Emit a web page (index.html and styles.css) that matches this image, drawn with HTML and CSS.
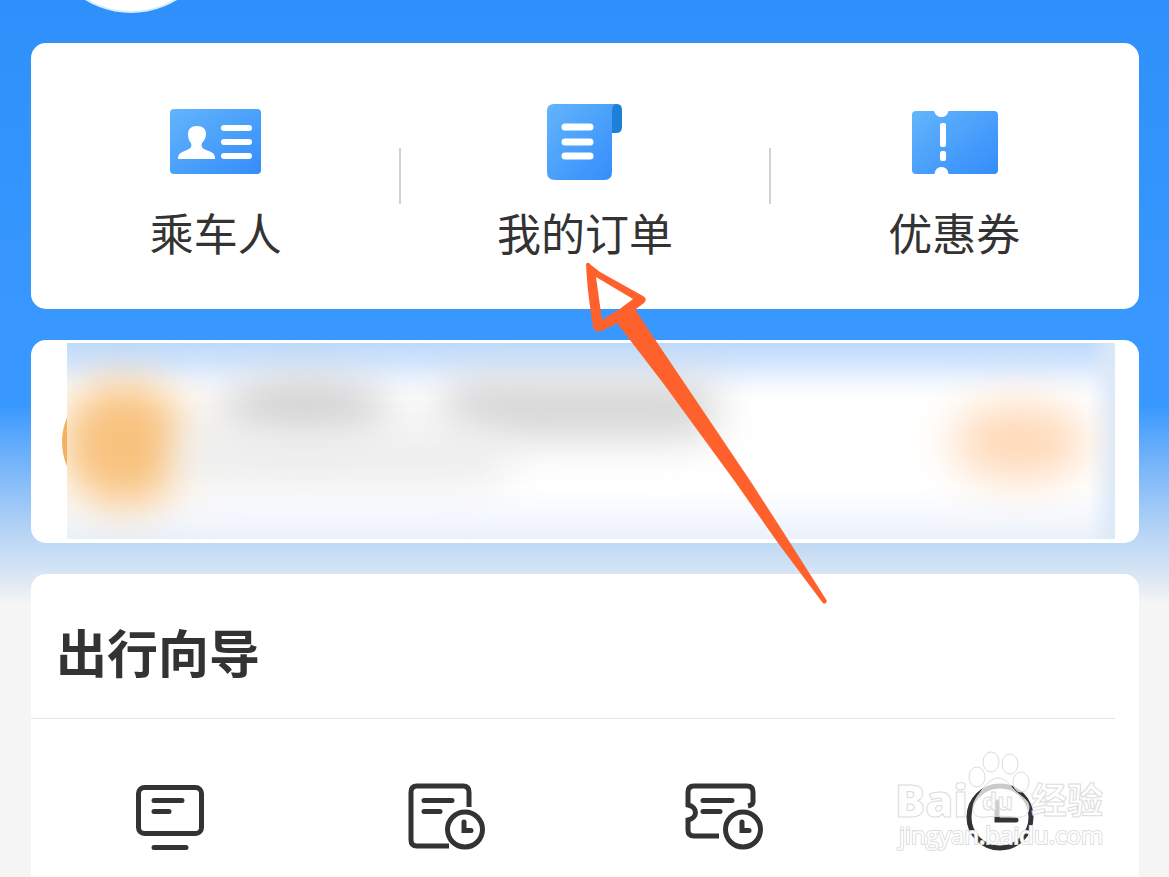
FILE: index.html
```html
<!DOCTYPE html>
<html lang="zh-CN">
<head>
<meta charset="utf-8">
<meta name="viewport" content="width=device-width, initial-scale=1">
<title>出行向导</title>
<link rel="stylesheet" href="styles.css">
</head>
<body>
<div class="page">
  <div class="avatar"></div>

  <nav class="card shortcuts">
    <a class="shortcut" href="#">
      <svg class="shortcut-icon" viewBox="169 100 92 84" width="92" height="84" aria-hidden="true">
        <defs><linearGradient id="blue" x1="0" y1="0" x2="1" y2="1"><stop offset="0" stop-color="#62b5fb"/><stop offset="1" stop-color="#348cfb"/></linearGradient></defs>
        <rect x="169" y="109" width="91" height="65" rx="4" fill="url(#blue)"/>
        <path d="M187 134c0-5 3-8 9-8s9 3 9 8c0 4-2 7-4 9-1 4 0 5 4 7 6 2 9 3 9 9h-37c0-6 4-7 9-9 4-2 5-3 4-7-2-2-3-5-3-9z" fill="#fff"/>
        <path d="M223 128h25M223 142h25M223 156h25" stroke="#fff" stroke-width="6" stroke-linecap="round"/>
      </svg>
      <span>乘车人</span>
    </a>
    <a class="shortcut" href="#">
      <svg class="shortcut-icon" viewBox="539 100 92 84" width="92" height="84" aria-hidden="true">
        <path d="M611 104h6q5 0 5 6v17q0 6-6 6h-5z" fill="#1d7fd6"/>
        <path d="M554 104h62q-4 1-4 7v61q0 8-8 8h-49q-8 0-8-8v-61q0-7 7-7z" fill="url(#blue)"/>
        <path d="M565 127h25M565 142h25M565 156h25" stroke="#fff" stroke-width="7" stroke-linecap="round"/>
      </svg>
      <span>我的订单</span>
      <svg class="pointer" viewBox="580 255 255 355" width="255" height="355" aria-hidden="true">
        <path fill="#ff612c" d="M610 314L663 383L736 483L778 543L822 602Q825 606 827 601L789 541L751 482L685 384L648 329L633 306z"/>
        <path fill="#ff612c" fill-rule="evenodd" d="M586 264Q588 261 591 265L600 272L643 296Q648 299 644 303L632 312L614 325L601 331Q594 333 593 326Q587 291 586 264zM596 277L602 320L617 311L633 299z"/>
      </svg>
    </a>
    <a class="shortcut" href="#">
      <svg class="shortcut-icon" viewBox="908 100 92 84" width="92" height="84" aria-hidden="true">
        <path d="M916 111h18q2 6 7.500 6t7-6H994q4 0 4 4v55q0 4-4 4h-45.500q-1-7-7-7t-7 7H916q-4 0-4-4v-55q0-4 4-4z" fill="url(#blue)"/>
        <rect x="940" y="123" width="6" height="24" rx="2" fill="#fff"/>
        <rect x="940" y="151" width="6" height="10" rx="2" fill="#fff"/>
      </svg>
      <span>优惠券</span>
    </a>
  </nav>

  <section class="card notice">
    <div class="badge"></div>
    <div class="strip">
      <div class="blob blob-orange"></div>
      <div class="blob blob-title"></div>
      <div class="blob blob-title-long"></div>
      <div class="blob blob-text"></div>
      <div class="blob blob-action"></div>
    </div>
  </section>

  <section class="card guide">
    <h2 class="guide-title">出行向导</h2>
    <div class="guide-list">
      <a class="guide-item" href="#" aria-label="信息屏">
        <svg viewBox="130 780 80 72" width="80" height="72">
          <rect x="138.500" y="787.500" width="63" height="46" rx="6"/>
          <path d="M154 800.500h28M154 811.500h15M154 847.500h32" class="thin"/>
        </svg>
      </a>
      <a class="guide-item" href="#" aria-label="时刻单">
        <svg viewBox="408 780 80 72" width="80" height="72">
          <path d="M470 807v-15q0-6-6-6h-46q-6 0-6 6v48q0 6 6 6h32"/>
          <path d="M425 800.500h28M425 811.500h16" class="thin"/>
          <circle cx="466" cy="829.500" r="17.500"/>
          <path d="M465 822v8.500h7" class="thin"/>
        </svg>
      </a>
      <a class="guide-item" href="#" aria-label="车票时间">
        <svg viewBox="684 780 80 72" width="80" height="72">
          <path d="M748 806q5-1 5-4v-10q0-6-6-6h-53q-6 0-6 6v13c10 2 10 13 0 15v10q0 6 6 6h25"/>
          <path d="M703 800.500h29M703 811.500h17" class="thin"/>
          <circle cx="743" cy="829.500" r="17.500"/>
          <path d="M742 822v8.500h7" class="thin"/>
        </svg>
      </a>
      <a class="guide-item" href="#" aria-label="时间">
        <svg viewBox="961 780 80 72" width="80" height="72">
          <circle cx="1000" cy="817" r="31"/>
          <path d="M997 802v18h19" class="thin"/>
        </svg>
        <svg class="watermark" viewBox="890 745 220 110" width="220" height="110" aria-hidden="true">
          <g class="mark">
            <ellipse cx="977" cy="777" rx="8" ry="10"/>
            <ellipse cx="991" cy="762" rx="8" ry="10"/>
            <ellipse cx="1010" cy="764" rx="8" ry="10"/>
            <ellipse cx="1021" cy="782" rx="8" ry="10"/>
            <path d="M984 787c6-6 9-9 14-9 6 0 10 4 15 11 8 8 16 11 16 18 0 9-7 11-14 10-11-1-20-1-30 0-8 1-13-2-12-10 1-8 6-12 11-20z"/>
            <text x="895" y="817" class="mark-latin">Bai</text>
            <text x="982" y="810" class="mark-du">du</text>
            <text x="1031" y="814" class="mark-cjk">经验</text>
          </g>
          <text x="899" y="844" class="mark-url">jingyan.baidu.com</text>
        </svg>
      </a>
    </div>
  </section>
</div>
</body>
</html>
```
FILE: styles.css
```css
* {
  box-sizing: border-box;
}

body {
  margin: 0;
  background: #f5f5f5;
  color: #333;
  font-family: "Noto Sans CJK SC", sans-serif;
}

.page {
  position: relative;
  display: flex;
  flex-direction: column;
  gap: 31px;
  min-height: 100vh;
  padding: 43px 30px 0 31px;
  overflow: hidden;
  background: linear-gradient(#2f90fb 0, #3898ff 330px, #3898ff 405px, #6db0fb 455px, #bdd8f5 540px, #d6e4f5 572px, #f5f5f5 604px);
}

.avatar {
  position: absolute;
  top: -163px;
  left: 43px;
  width: 176px;
  height: 176px;
  border: 2px solid #d3edff;
  border-radius: 50%;
  background: #fff;
}

.card {
  border-radius: 15px;
  background: #fff;
}

.shortcuts {
  display: grid;
  grid-template-columns: repeat(3, 1fr);
  padding: 57px 0 44px;
}

.shortcut {
  position: relative;
  display: flex;
  flex-direction: column;
  align-items: center;
  gap: 15px;
  color: #333;
  font-size: 44px;
  line-height: 66px;
  text-decoration: none;
}

.shortcut + .shortcut::before {
  content: "";
  position: absolute;
  top: 48px;
  left: -1px;
  width: 2px;
  height: 56px;
  background: #d2d2d2;
}

.pointer {
  position: absolute;
  z-index: 2;
  top: 155px;
  left: 180px;
  pointer-events: none;
}

.notice {
  position: relative;
  padding: 3px 24px 4px 36px;
}

.badge {
  position: absolute;
  top: 40px;
  left: 31px;
  width: 124px;
  height: 124px;
  border-radius: 50%;
  background: #f3b263;
}

.strip {
  position: relative;
  height: 196px;
  overflow: hidden;
  background:
    linear-gradient(270deg, #dce8f7 0, #dce8f700 28px),
    linear-gradient(#bddafb 0, #d0e4fd 18px, #f2f7ff 40px, #fff 55px, #fff 145px, #f5f8fe 175px, #eaf1fa 100%);
}

.blob {
  position: absolute;
  border-radius: 50%;
  filter: blur(22px);
}

.blob-orange {
  top: 38px;
  left: -6px;
  width: 126px;
  height: 126px;
  background: #f8c27e;
}

.blob-title {
  top: 36px;
  left: 150px;
  width: 175px;
  height: 66px;
  background: #cecece;
}

.blob-title-long {
  top: 38px;
  left: 375px;
  width: 275px;
  height: 56px;
  border-radius: 24px;
  background: #d2d2d2;
}

.blob-text {
  top: 84px;
  left: 110px;
  width: 330px;
  height: 60px;
  border-radius: 24px;
  background: #ededed;
}

.blob-action {
  top: 60px;
  left: 885px;
  width: 134px;
  height: 78px;
  background: #ffd9b8;
}

.guide {
  flex: 1;
  border-radius: 15px 15px 0 0;
}

.guide-title {
  margin: 0 24px 0 0;
  padding: 40px 0 29px 25px;
  border-bottom: 1px solid #e6e6e6;
  font-size: 51px;
  font-weight: 700;
  line-height: 75px;
}

.guide-list {
  display: grid;
  grid-template-columns: repeat(4, 1fr);
  padding: 61px 0 25px;
}

.guide-item {
  position: relative;
  display: flex;
  justify-content: center;
  fill: none;
  stroke: #333;
  stroke-width: 5;
}

.thin {
  stroke-linecap: round;
}

.watermark {
  position: absolute;
  top: -35px;
  left: 28px;
}

.mark {
  fill: #fff;
  fill-opacity: 0.75;
  stroke: #dcdcdc;
  stroke-width: 1;
}

.mark-latin {
  font: 800 45px "Open Sans", sans-serif;
}

.mark-du {
  font: 700 24px "Open Sans", sans-serif;
}

.mark-cjk {
  font: 700 36px "Noto Sans CJK SC", sans-serif;
}

.mark-url {
  fill: #fff;
  stroke: #dedede;
  stroke-width: 2px;
  paint-order: stroke;
  font: 400 24px "Open Sans", sans-serif;
}
```
